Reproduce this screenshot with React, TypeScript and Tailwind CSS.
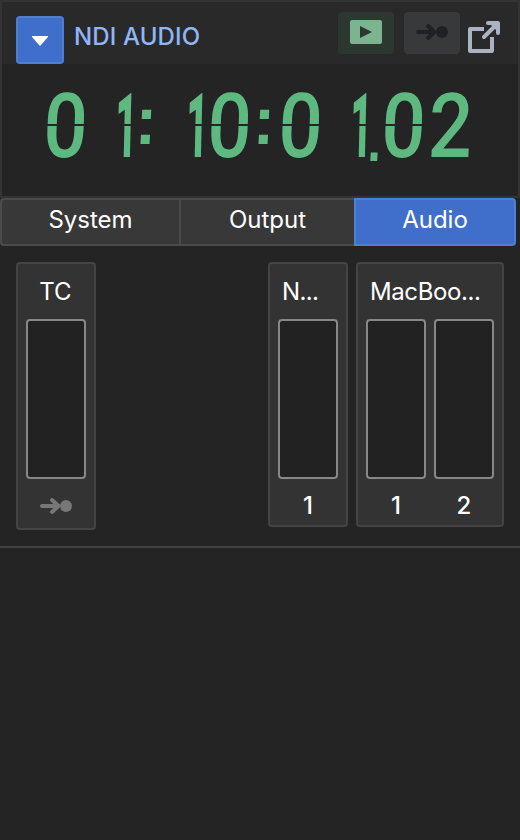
import React from "react";

function RouteIcon({ className }: { className: string }) {
  return (
    <svg width="32" height="18" viewBox="0 0 32 18" className={className} fill="none">
      <path d="M2 9H18M12 3L18.5 9L12 15" stroke="currentColor" strokeWidth="4" strokeLinecap="round" strokeLinejoin="round" />
      <circle cx="26" cy="9" r="6" fill="currentColor" />
    </svg>
  );
}

function Digit({ value }: { value: string }) {
  const one = value === "1";
  return (
    <span className="relative flex h-16 w-[47px] justify-center">
      <span
        className={
          one
            ? "block origin-center translate-x-[14px] translate-y-[2px] -skew-x-3 scale-x-[0.42] font-black leading-16"
            : "block origin-center translate-y-[2px] -skew-x-3 scale-x-[0.86] leading-16"
        }
      >
        {value}
      </span>
      {value !== "2" && <span className="absolute top-[31px] left-0 h-[2px] w-full bg-[#242424]" />}
    </span>
  );
}

function Colon() {
  return (
    <span className="flex h-16 w-[23.5px] justify-center font-['Liberation_Sans',sans-serif] text-[68px] font-bold">
      <span className="block -translate-x-px translate-y-[-5px] -skew-x-3 scale-x-[0.95] leading-16">:</span>
    </span>
  );
}

function Timecode() {
  return (
    <div className="flex h-[132px] items-start pt-[29px] pl-10 font-['Roboto',sans-serif] text-[90px] font-medium text-[#5db97f]">
      <Digit value="0" />
      <Digit value="1" />
      <Colon />
      <Digit value="1" />
      <Digit value="0" />
      <Colon />
      <Digit value="0" />
      <Digit value="1" />
      <span className="flex h-16 w-[9px] justify-center font-['Liberation_Sans',sans-serif] text-[80px] font-normal">
        <span className="block translate-y-[9px] -skew-x-3 scale-x-[0.9] leading-16">.</span>
      </span>
      <Digit value="0" />
      <Digit value="2" />
    </div>
  );
}

function Meter({ children }: { children: React.ReactNode }) {
  return (
    <div className="flex w-[60px] flex-col items-center">
      <div className="h-40 w-full rounded-[4px] border-2 border-[#888888] bg-[#222222]" />
      <div className="flex h-[46px] items-center pt-2 font-medium">{children}</div>
    </div>
  );
}

function Group({ title, className, children }: { title: string; className: string; children: React.ReactNode }) {
  return (
    <section className={"rounded-[4px] border-2 border-[#444444] bg-[#333333] px-2 " + className}>
      <h2 className="flex h-[55px] items-center pt-px text-2xl whitespace-nowrap">{title}</h2>
      <div className="flex gap-2">{children}</div>
    </section>
  );
}

export default function App() {
  return (
    <main className="h-[840px] w-[520px] overflow-hidden bg-[#242424] font-['Inter',sans-serif] text-2xl text-white">
      <div className="h-[198px] border-2 border-[#333333]">
        <header className="flex h-[62px] items-start bg-[#292929] pl-[14px]">
          <button className="mt-[14px] flex size-12 items-center justify-center rounded-[4px] border-2 border-[#4f7fd1] bg-[#406fcb]">
            <svg width="16" height="10" viewBox="0 0 16 10" className="mt-px">
              <path d="M0 0H16V1L8 10L0 1Z" fill="white" />
            </svg>
          </button>
          <h1 className="mt-[17px] ml-[10px] text-2xl leading-9 font-medium tracking-[0.15px] text-[#8fb6f8]">NDI AUDIO</h1>
          <div className="ml-auto flex pr-[17px]">
            <div className="mt-[10px] flex h-[42px] w-14 items-center justify-center rounded-[4px] bg-[#2c372f]">
              <svg width="32" height="24" viewBox="0 0 32 24" className="-mt-[2px]">
                <rect width="32" height="24" rx="2" fill="#7ab58f" />
                <path d="M10 6L22 12L10 18Z" fill="#2c372f" />
              </svg>
            </div>
            <div className="mt-[10px] ml-[10px] flex h-[42px] w-14 items-center justify-center rounded-[4px] bg-[#38393b]">
              <RouteIcon className="-mt-[2px] text-[#1e2226]" />
            </div>
            <svg width="34" height="34" viewBox="0 0 34 34" className="mt-[18px] ml-[7px]" fill="none">
              <path d="M17 9H3V31H25V17" stroke="#abb3c2" strokeWidth="4" strokeLinejoin="round" />
              <path d="M16 18L30 4" stroke="#292929" strokeWidth="7" />
              <path d="M17 17L29 5" stroke="#abb3c2" strokeWidth="4" strokeLinecap="round" />
              <path d="M21 3H31V13" stroke="#abb3c2" strokeWidth="4" strokeLinecap="round" strokeLinejoin="round" />
              <path d="M22 3H31V12Z" fill="#abb3c2" />
            </svg>
          </div>
        </header>
        <Timecode />
      </div>

      <nav className="flex h-12 w-[516px] text-2xl">
        <button className="flex w-[181px] items-center justify-center rounded-l-[4px] border-2 border-[#4b4b4b] bg-[#383838] pb-1">System</button>
        <button className="flex w-[173px] items-center justify-center border-y-2 border-[#4b4b4b] bg-[#383838] pb-1">Output</button>
        <button className="flex w-[162px] items-center justify-center rounded-r-[4px] border-2 border-[#4f7fd1] bg-[#406fcb] pb-1">Audio</button>
      </nav>

      <div className="flex h-[302px] items-start border-b-2 border-[#414141] px-4 pt-4">
        <Group title="TC" className="h-[268px] w-20 [&>h2]:justify-center [&>h2]:pr-px">
          <Meter>
            <RouteIcon className="text-[#777777]" />
          </Meter>
        </Group>
        <Group title="N..." className="ml-auto h-[265px] w-20 [&>h2]:pl-1 [&>h2]:tracking-[-0.6px]">
          <Meter>1</Meter>
        </Group>
        <Group title="MacBoo..." className="ml-2 h-[265px] w-[148px] [&>h2]:pl-1 [&>h2]:tracking-[-0.4px]">
          <Meter>1</Meter>
          <Meter>2</Meter>
        </Group>
      </div>
    </main>
  );
}
